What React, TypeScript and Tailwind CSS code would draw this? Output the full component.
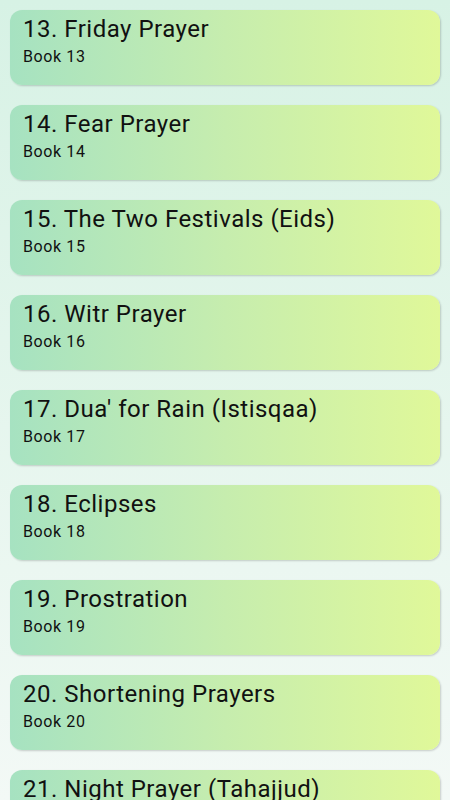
const books = [
  { n: 13, title: 'Friday Prayer' },
  { n: 14, title: 'Fear Prayer' },
  { n: 15, title: 'The Two Festivals (Eids)' },
  { n: 16, title: 'Witr Prayer' },
  { n: 17, title: "Dua' for Rain (Istisqaa)" },
  { n: 18, title: 'Eclipses' },
  { n: 19, title: 'Prostration' },
  { n: 20, title: 'Shortening Prayers' },
  { n: 21, title: 'Night Prayer (Tahajjud)' },
  { n: 22, title: 'Actions while Praying' },
];

function BookCard({ n, title }: { n: number; title: string }) {
  return (
    <div className="h-[75px] shrink-0 rounded-[12px] bg-gradient-to-r from-[#a6e2c1] via-[#c6edae] to-[#e0f899] px-[13px] pt-[5px] shadow-[1px_1px_2px_rgba(0,0,0,0.18)]">
      <div className="truncate text-[24px] leading-[28px] tracking-[0.5px] text-[#111]">
        {n}. {title}
      </div>
      <div className="mt-[4px] text-[16px] leading-[19px] tracking-[0.6px] text-[#111]">Book {n}</div>
    </div>
  );
}

export default function App() {
  return (
    <div
      className="flex h-[800px] flex-col gap-[20px] overflow-hidden bg-gradient-to-b from-[#d7f2e5] to-[#f3f9f6] px-[10px] pt-[10px]"
      style={{ fontFamily: 'Roboto, "Noto Sans", sans-serif' }}
    >
      {books.map((b) => (
        <BookCard key={b.n} n={b.n} title={b.title} />
      ))}
    </div>
  );
}
